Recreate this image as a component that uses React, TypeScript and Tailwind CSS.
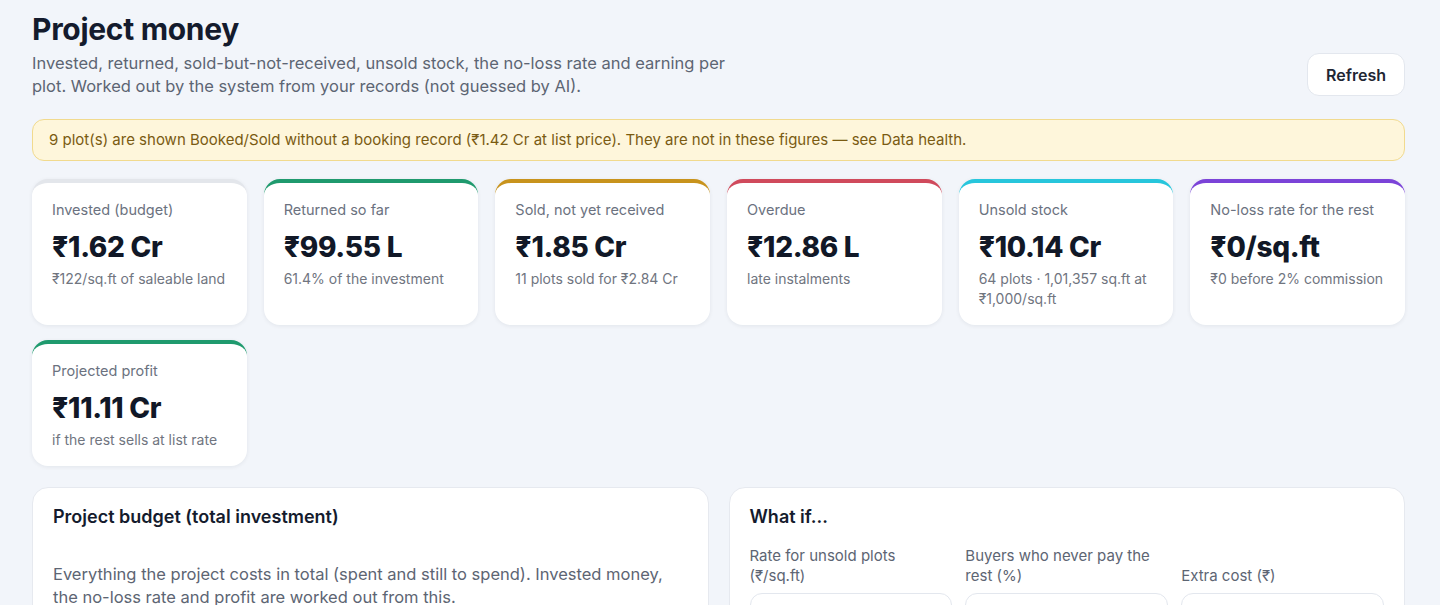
const FONT = { fontFamily: "Inter, 'Noto Sans', sans-serif" };

const STATS = [
  {
    label: "Invested (budget)",
    value: "₹1.62 Cr",
    sub: "₹122/sq.ft of saleable land",
    bar: "border-t-[#e3e6eb]",
  },
  {
    label: "Returned so far",
    value: "₹99.55 L",
    sub: "61.4% of the investment",
    bar: "border-t-[#1f9a6e]",
  },
  {
    label: "Sold, not yet received",
    value: "₹1.85 Cr",
    sub: "11 plots sold for ₹2.84 Cr",
    bar: "border-t-[#c8931c]",
  },
  {
    label: "Overdue",
    value: "₹12.86 L",
    sub: "late instalments",
    bar: "border-t-[#d04a5c]",
  },
  {
    label: "Unsold stock",
    value: "₹10.14 Cr",
    sub: "64 plots · 1,01,357 sq.ft at ₹1,000/sq.ft",
    bar: "border-t-[#27c6dc]",
  },
  {
    label: "No-loss rate for the rest",
    value: "₹0/sq.ft",
    sub: "₹0 before 2% commission",
    bar: "border-t-[#7b43d8]",
  },
  {
    label: "Projected profit",
    value: "₹11.11 Cr",
    sub: "if the rest sells at list rate",
    bar: "border-t-[#1f9a6e]",
  },
];

function StatCard({ label, value, sub, bar }: (typeof STATS)[number]) {
  return (
    <div
      className={`rounded-2xl border-t-4 bg-white px-5 pt-[17px] pb-4 shadow-[0_1px_4px_rgba(15,23,42,0.07)] ${bar}`}
    >
      <p className="text-[14.5px] leading-5 text-[#6b7280]">{label}</p>
      <p className="mt-[9px] text-[28px] font-extrabold leading-9 tracking-[-0.01em] text-[#111827]">
        {value}
      </p>
      <p className="mt-1 text-[14px] leading-5 text-[#70757f]">{sub}</p>
    </div>
  );
}

export default function App() {
  return (
    <div
      style={FONT}
      className="min-h-screen bg-[#f2f5fa] pl-8 pr-[35px] pt-[11px] pb-10 text-[#111827]"
    >
      {/* Header */}
      <div className="flex items-end justify-between">
        <div>
          <h1 className="text-[30px] font-bold leading-9 tracking-[-0.01em] text-[#141b2d]">
            Project money
          </h1>
          <p className="mt-[5px] max-w-[700px] text-[16.5px] leading-[23px] text-[#5d6573]">
            Invested, returned, sold-but-not-received, unsold stock, the no-loss rate and earning
            per plot. Worked out by the system from your records (not guessed by AI).
          </p>
        </div>
        <button className="mb-[2px] h-[43px] rounded-xl border border-[#e3e7ee] bg-white px-[18px] text-[16px] font-semibold text-[#1f2633]">
          Refresh
        </button>
      </div>

      {/* Warning */}
      <div className="mt-[21px] rounded-xl border border-[#f1da8e] bg-[#fef6db] px-4 py-[10px] text-[15px] leading-[20px] text-[#7a5b12]">
        9 plot(s) are shown Booked/Sold without a booking record (₹1.42 Cr at list price). They are
        not in these figures — see Data health.
      </div>

      {/* Stats */}
      <div className="mt-[18px] grid grid-cols-6 gap-x-[17px] gap-y-[15px]">
        {STATS.map((s) => (
          <StatCard key={s.label} {...s} />
        ))}
      </div>

      {/* Panels */}
      <div className="mt-[21px] grid grid-cols-2 gap-5">
        <div className="rounded-2xl border border-[#e6e9ef] bg-white px-5 pt-[15px] pb-6">
          <h2 className="text-[18px] font-semibold leading-7 text-[#141b2d]">
            Project budget (total investment)
          </h2>
          <p className="mt-8 text-[16.5px] leading-[23px] text-[#5d6573]">
            Everything the project costs in total (spent and still to spend). Invested money, the
            no-loss rate and profit are worked out from this.
          </p>
        </div>
        <div className="rounded-2xl border border-[#e6e9ef] bg-white px-5 pt-[15px] pb-6">
          <h2 className="text-[18px] font-semibold leading-7 text-[#141b2d]">What if…</h2>
          <div className="mt-[15px] grid grid-cols-3 items-end gap-x-[13px]">
            {["Rate for unsold plots (₹/sq.ft)", "Buyers who never pay the rest (%)", "Extra cost (₹)"].map(
              (l) => (
                <label key={l} className="flex flex-col">
                  <span className="pr-2 text-[15px] leading-5 text-[#5d6573]">{l}</span>
                </label>
              )
            )}
          </div>
          <div className="mt-[7px] grid grid-cols-3 gap-x-[13px]">
            <input className="h-11 rounded-xl border border-[#e3e7ee] bg-white px-3 text-[15px]" />
            <input className="h-11 rounded-xl border border-[#e3e7ee] bg-white px-3 text-[15px]" />
            <input className="h-11 rounded-xl border border-[#e3e7ee] bg-white px-3 text-[15px]" />
          </div>
        </div>
      </div>
    </div>
  );
}
